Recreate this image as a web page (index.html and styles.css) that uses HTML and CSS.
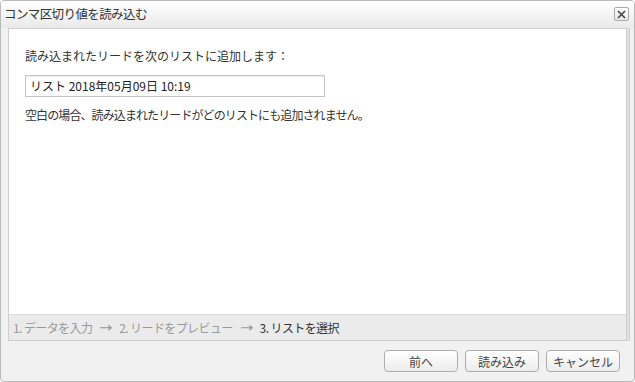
FILE: index.html
```html
<!DOCTYPE html>
<html lang="ja">
<head>
<meta charset="utf-8">
<link rel="stylesheet" href="styles.css">
</head>
<body>
<div class="window">
  <div class="titlebar">
    <span class="title">コンマ区切り値を読み込む</span>
    <span class="close"><svg width="11" height="11" viewBox="0 0 11 11"><path d="M2 2 L9 9 M9 2 L2 9" stroke="#444" stroke-width="1.6" fill="none"/></svg></span>
  </div>
  <div class="panel">
    <div class="content">
      <p class="label">読み込まれたリードを次のリストに追加します：</p>
      <div class="input">リスト 2018年05月09日 10:19</div>
      <p class="note">空白の場合、読み込まれたリードがどのリストにも追加されません。</p>
    </div>
    <div class="steps">
      <span class="step">1. データを入力</span>
      <span class="arrow">→</span>
      <span class="step">2. リードをプレビュー</span>
      <span class="arrow">→</span>
      <span class="step current">3. リストを選択</span>
    </div>
  </div>
  <div class="buttons">
    <span class="btn">前へ</span>
    <span class="btn">読み込み</span>
    <span class="btn">キャンセル</span>
  </div>
</div>
</body>
</html>
```
FILE: styles.css
```css
* { box-sizing: border-box; }
html, body { margin: 0; padding: 0; background: #fff; }
body {
  font-family: "Noto Sans CJK JP", "Noto Sans", sans-serif;
  font-size: 12px;
  color: #333;
}
.window {
  width: 635px;
  height: 382px;
  border: 1px solid #b9b9b9;
  border-radius: 4px;
  background: #f1f1f1;
  display: flex;
  flex-direction: column;
  overflow: hidden;
}
.titlebar {
  height: 27px;
  background: linear-gradient(#ffffff, #e9e9e9);
  display: flex;
  align-items: center;
  justify-content: space-between;
  padding: 0 5px 2px 3px;
}
.title { font-size: 12.5px; color: #333; letter-spacing: -0.6px; }
.close {
  width: 15px;
  height: 14px;
  border: 1px solid #aaa;
  border-radius: 2px;
  background: linear-gradient(#fff, #e6e6e6);
  display: flex;
  align-items: center;
  justify-content: center;
  margin-top: 1px;
}
.panel {
  margin: 0 7px 0 7px;
  height: 313px;
  border: 1px solid #cfcfcf;
  box-shadow: 2px 0 0 #e0e0e0, 3px 0 0 #d0d0d0;
  background: #fff;
  display: flex;
  flex-direction: column;
}
.content {
  flex: 1;
  padding: 16px 16px 0 16px;
}
.label { margin: 0 0 8px 0; line-height: 22px; }
.input {
  width: 300px;
  height: 22px;
  border: 1px solid #c4c4c4;
  padding: 0 4px;
  line-height: 20px;
  color: #222;
  box-shadow: inset 0 1px 1px #eee;
}
.note { margin: 9px 0 0 0; line-height: 18px; letter-spacing: -0.9px; }
.steps {
  height: 26px;
  background: #ebebeb;
  border-top: 1px solid #dcdcdc;
  display: flex;
  align-items: center;
  padding-left: 4px;
  color: #999;
}
.step { letter-spacing: -0.6px; }
.arrow { margin: 0 8px 0 8px; font-family: "DejaVu Sans", sans-serif; font-size: 13px; transform: scaleX(1.25); }
.current { color: #333; }
.buttons {
  flex: 1;
  display: flex;
  justify-content: flex-end;
  align-items: center;
  gap: 7px;
  padding: 0 14px 0 0;
}
.btn {
  width: 74px;
  height: 22px;
  border: 1px solid #adadad;
  border-radius: 4px;
  background: linear-gradient(#ffffff, #ececec);
  display: flex;
  align-items: center;
  justify-content: center;
  color: #444;
}
```
